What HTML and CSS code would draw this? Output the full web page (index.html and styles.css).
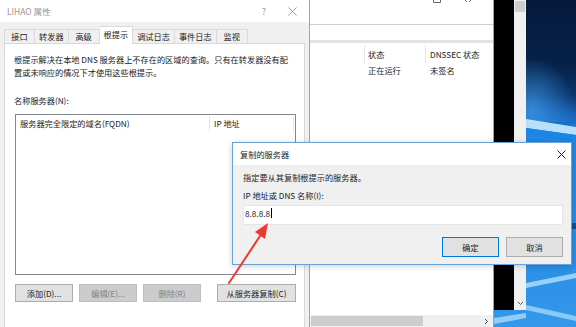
FILE: index.html
```html
<!DOCTYPE html>
<html lang="zh-CN">
<head>
    <meta charset="UTF-8">
    <meta name="viewport" content="width=device-width, initial-scale=1.0">
    <title>LIHAO 属性</title>
    <link rel="stylesheet" href="styles.css">
</head>
<body>
<div class="desktop">

    <!-- Desktop wallpaper (only the right edge shows) -->
    <svg class="wallpaper" width="576" height="327" viewBox="0 0 576 327">
        <defs>
            <linearGradient id="sky" x1="0" y1="0" x2="0" y2="1">
                <stop offset="0" stop-color="#05193a"/>
                <stop offset="0.2" stop-color="#06224a"/>
                <stop offset="0.29" stop-color="#0a3569"/>
                <stop offset="0.35" stop-color="#1561b5"/>
                <stop offset="0.42" stop-color="#2188e4"/>
                <stop offset="0.8" stop-color="#2a8fe6"/>
                <stop offset="1" stop-color="#3499ea"/>
            </linearGradient>
            <radialGradient id="glow" cx="0.1" cy="0.85" r="0.9">
                <stop offset="0" stop-color="#3a8fe0" stop-opacity="0.9"/>
                <stop offset="1" stop-color="#3a8fe0" stop-opacity="0"/>
            </radialGradient>
        </defs>
        <rect x="480" y="0" width="96" height="327" fill="url(#sky)"/>
        <rect x="526" y="60" width="50" height="62" fill="url(#glow)"/>
        <polygon points="526,119 576,127 576,135 526,128" fill="#c8ebff" opacity="0.9"/>
        <polygon points="526,128 576,135 576,142 526,134" fill="#1c86e6"/>
        <polygon points="526,283 576,273 576,278 526,288" fill="#a8dcfb" opacity="0.85"/>
        <polygon points="526,305 576,316 576,321 526,310" fill="#9fd6fa" opacity="0.8"/>
        <polygon points="494,318 526,313 526,318 494,324" fill="#a8dcfb" opacity="0.8"/>
        <rect x="572" y="223" width="4" height="6" fill="#0e4f9a"/>
    </svg>

    <!-- Pane behind the console -->
    <div class="side-strip">
        <div class="black-pane"></div>
        <div class="vscroll">
            <div class="vthumb"></div>
            <svg class="vdown" width="7" height="5" viewBox="0 0 7 5"><path d="M1 1 L3.5 3.5 L6 1" fill="none" stroke="#555" stroke-width="1"/></svg>
        </div>
    </div>

    <!-- DNS console window -->
    <div class="console">
        <div class="console-title">
            <svg width="50" height="4" viewBox="0 0 50 4">
                <path d="M0.5 0 V2.5 H7.5 V0" fill="none" stroke="#666" stroke-width="1"/>
                <path d="M32 0 L34 2 M38 0 L36 2" stroke="#666" stroke-width="1"/>
            </svg>
        </div>
        <div class="console-toolbar"></div>
        <div class="console-band"></div>
        <div class="console-list">
            <div class="list-head">
                <span class="col col-name"></span>
                <span class="col col-state">状态</span>
                <span class="col col-sec">DNSSEC 状态</span>
            </div>
            <div class="list-row">
                <span class="col col-name"></span>
                <span class="col col-state">正在运行</span>
                <span class="col col-sec">未签名</span>
            </div>
        </div>
        <div class="hscroll">
            <div class="hthumb"></div>
            <svg class="hright" width="5" height="7" viewBox="0 0 5 7"><path d="M1 1 L3.5 3.5 L1 6" fill="none" stroke="#444" stroke-width="1"/></svg>
        </div>
    </div>

    <!-- Properties window -->
    <div class="props">
        <div class="props-title">
            <span class="name">LIHAO 属性</span>
            <span class="help">?</span>
            <svg class="close" width="9" height="9" viewBox="0 0 9 9"><path d="M0.5 0.5 L8.5 8.5 M8.5 0.5 L0.5 8.5" stroke="#9a9a9a" stroke-width="1"/></svg>
        </div>
        <div class="tabs">
            <span class="tab">接口</span>
            <span class="tab">转发器</span>
            <span class="tab">高级</span>
            <span class="tab active">根提示</span>
            <span class="tab">调试日志</span>
            <span class="tab">事件日志</span>
            <span class="tab">监视</span>
        </div>
        <div class="panel">
            <p class="hint">根提示解决在本地 DNS 服务器上不存在的区域的查询。只有在转发器没有配<br>置或未响应的情况下才使用这些根提示。</p>
            <div class="field-label">名称服务器(N):</div>
            <div class="listbox">
                <div class="listbox-head">
                    <span class="h-fqdn">服务器完全限定的域名(FQDN)</span>
                    <span class="h-ip">IP 地址</span>
                </div>
            </div>
            <div class="btn-row">
                <button class="btn">添加(D)...</button>
                <button class="btn disabled">编辑(E)...</button>
                <button class="btn disabled">删除(R)</button>
                <button class="btn copy">从服务器复制(C)</button>
            </div>
        </div>
    </div>

    <!-- Copy servers dialog -->
    <div class="dialog">
        <div class="dialog-title">
            <span>复制的服务器</span>
            <svg width="9" height="9" viewBox="0 0 9 9"><path d="M0.5 0.5 L8.5 8.5 M8.5 0.5 L0.5 8.5" stroke="#222" stroke-width="1"/></svg>
        </div>
        <div class="dialog-body">
            <div class="dlg-text">指定要从其复制根提示的服务器。</div>
            <div class="dlg-label">IP 地址或 DNS 名称(I):</div>
            <div class="textbox">8.8.8.8<span class="caret"></span></div>
            <div class="dlg-buttons">
                <button class="btn default">确定</button>
                <button class="btn">取消</button>
            </div>
        </div>
    </div>

    <!-- Red annotation arrow -->
    <svg class="arrow" width="576" height="327" viewBox="0 0 576 327">
        <path d="M229 283 L262 233" stroke="#ec3a2f" stroke-width="2" stroke-linecap="round"/>
        <polygon points="268,223 265,239 255,232" fill="#ec3a2f"/>
    </svg>
</div>
</body>
</html>
```

FILE: styles.css
```css
* {
    box-sizing: border-box;
}
body {
    margin: 0;
    font-family: "Noto Sans CJK SC", "Noto Sans", sans-serif;
    font-size: 8.2px;
    color: #222;
    overflow: hidden;
}
.desktop {
    position: relative;
    width: 576px;
    height: 327px;
    overflow: hidden;
    background: #0a2a52;
}
.wallpaper {
    position: absolute;
    left: 0;
    top: 0;
}

/* strip behind console */
.side-strip {
    position: absolute;
    left: 494px;
    top: 0;
    width: 32px;
    height: 310px;
    display: flex;
}
.black-pane {
    width: 20px;
    background: #000;
}
.vscroll {
    width: 12px;
    background: #f0f0f0;
    display: flex;
    flex-direction: column;
    align-items: center;
    padding: 1px 1px 4px;
}
.vthumb {
    width: 10px;
    height: 11px;
    background: #cdcdcd;
}
.vdown {
    margin-top: auto;
}

/* console window */
.console {
    position: absolute;
    left: 300px;
    top: 0;
    width: 194px;
    height: 327px;
    background: #fff;
    border-right: 1px solid #a0a0a0;
    display: flex;
    flex-direction: column;
}
.console-title {
    height: 25px;
    border-bottom: 1px solid #cfcfcf;
    display: flex;
    justify-content: flex-end;
    align-items: flex-start;
    padding-right: 10px;
}
.console-toolbar {
    height: 15px;
}
.console-band {
    height: 3px;
    background: #e3e3e3;
}
.console-list {
    padding-top: 2px;
}
.list-head, .list-row {
    display: flex;
}
.list-head {
    height: 18px;
    line-height: 18px;
}
.list-row {
    height: 14px;
    line-height: 14px;
}
.col-name {
    width: 65px;
}
.col-state {
    width: 61px;
    padding-left: 3px;
}
.col-sec {
    padding-left: 4px;
}
.list-head .col-name, .list-head .col-state {
    border-right: 1px solid #e5e5e5;
}
.hscroll {
    margin-top: auto;
    height: 12px;
    background: #f0f0f0;
    display: flex;
    align-items: center;
    padding: 0 4px 0 11px;
}
.hthumb {
    width: 112px;
    height: 10px;
    background: #cdcdcd;
}
.hright {
    margin-left: auto;
}

/* properties window */
.props {
    position: absolute;
    left: 0;
    top: 0;
    width: 310px;
    height: 340px;
    background: #f0f0f0;
    border-right: 1px solid #a3a3a3;
    display: flex;
    flex-direction: column;
}
.props-title {
    height: 22px;
    background: #fff;
    display: flex;
    align-items: center;
    padding: 0 12px 0 7px;
    color: #9a9a9a;
    font-size: 8.5px;
}
.props-title .name {
    flex: 1;
}
.props-title .help {
    margin-right: 22px;
    font-size: 9px;
}
.tabs {
    height: 21px;
    display: flex;
    align-items: flex-end;
    padding-left: 4px;
}
.tab {
    min-width: 31px;
    height: 14px;
    line-height: 12px;
    padding: 0 4px;
    text-align: center;
    border: 1px solid #d9d9d9;
    border-bottom: none;
    border-left: none;
    background: #f0f0f0;
}
.tab:first-child {
    border-left: 1px solid #d9d9d9;
}
.tab.active {
    position: relative;
    z-index: 1;
    height: 18px;
    line-height: 14px;
    margin-bottom: -1px;
    background: #fff;
}
.panel {
    flex: 1;
    margin: 0 4px 0 4px;
    background: #fff;
    border: 1px solid #d9d9d9;
    padding: 9px 9px 0 9px;
}
.hint {
    margin: 0;
    line-height: 13px;
    white-space: nowrap;
}
.field-label {
    margin-top: 15px;
    line-height: 13px;
}
.listbox {
    margin: 7px 0 0 1px;
    width: 281px;
    height: 161px;
    border: 1px solid #828790;
    background: #fff;
}
.listbox-head {
    display: flex;
    margin-top: 1px;
    height: 15px;
    line-height: 15px;
}
.listbox-head span {
    border-right: 1px solid #e5e5e5;
}
.h-fqdn {
    width: 194px;
    padding-left: 4px;
}
.h-ip {
    width: 84px;
    padding-left: 4px;
}
.btn-row {
    display: flex;
    gap: 6px;
    margin: 9px 0 0 1px;
    width: 281px;
}
.btn {
    height: 18px;
    width: 58px;
    padding: 0;
    border: 1px solid #adadad;
    background: #e1e1e1;
    font: inherit;
    color: #222;
    line-height: 15px;
}
.btn.disabled {
    background: #cccccc;
    border-color: #bfbfbf;
    color: #848484;
}
.btn.copy {
    width: 79px;
    margin-left: auto;
}

/* dialog */
.dialog {
    position: absolute;
    left: 232px;
    top: 142px;
    width: 340px;
    height: 123px;
    border: 1px solid #6ba2d8;
    background: #f0f0f0;
    box-shadow: 0 1px 6px rgba(0, 0, 0, 0.2);
    display: flex;
    flex-direction: column;
}
.dialog-title {
    height: 22px;
    background: #fff;
    display: flex;
    align-items: center;
    justify-content: space-between;
    padding: 0 5px 0 7px;
}
.dialog-body {
    padding: 6px 9px 0 10px;
}
.dlg-text, .dlg-label {
    line-height: 13px;
}
.dlg-label {
    margin-top: 5px;
}
.textbox {
    margin-top: 3px;
    width: 320px;
    height: 20px;
    background: #fff;
    border: 1px solid #e6e6e6;
    padding-left: 1px;
    line-height: 13px;
    padding-top: 1px;
    display: flex;
    align-items: flex-start;
}
.caret {
    display: inline-block;
    width: 1px;
    height: 10px;
    margin: 1px 0 0 1px;
    background: #000;
}
.dlg-buttons {
    display: flex;
    justify-content: flex-end;
    gap: 7px;
    margin-top: 12px;
    width: 320px;
}
.dlg-buttons .btn {
    width: 57px;
    height: 20px;
    line-height: 17px;
}
.btn.default {
    border-color: #0078d7;
}

.arrow {
    position: absolute;
    left: 0;
    top: 0;
    pointer-events: none;
}
```
